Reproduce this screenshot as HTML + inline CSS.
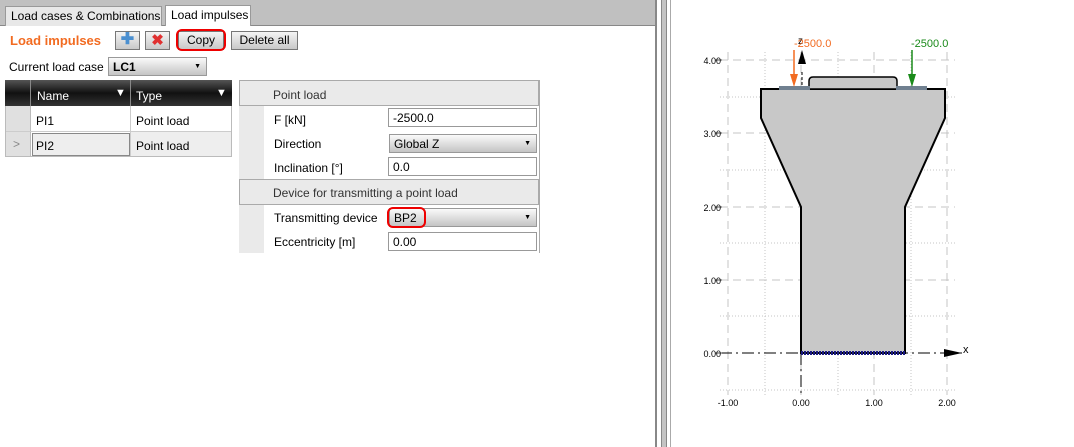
<!DOCTYPE html><html><head><style>
body{margin:0;width:1074px;height:447px;background:#fff;font-family:"Liberation Sans",sans-serif;font-size:12px;position:relative;overflow:hidden;color:#000}
div{white-space:nowrap}
.a{position:absolute}
.tab{position:absolute;border:1px solid #999;border-bottom:none;background:#e8e8e8;padding:2px 0 0 5px;font-size:12px;box-sizing:border-box}
.btn{position:absolute;height:17px;border:1px solid #777;background:linear-gradient(#f4f4f4,#c8c8c8);font-size:12px;text-align:center;line-height:17px}
.inp{position:absolute;border:1px solid #999;background:#fff;height:19px;line-height:18px;padding-left:4px;font-size:12px;box-sizing:border-box}
.dd{background:linear-gradient(#fafafa,#c4c4c4)}
.lbl{position:absolute;font-size:12px}
</style></head><body>
<div class="a" style="left:0;top:0;width:655px;height:25px;background:#c0c0c0"></div>
<div class="a" style="left:0;top:25px;width:655px;height:1px;background:#888"></div>
<div class="tab" style="left:5px;top:6px;height:20px;width:157px">Load cases &amp; Combinations</div>
<div class="tab" style="left:165px;top:5px;height:21px;width:86px;background:#fff">Load impulses</div>
<div class="a" style="left:655px;top:0;width:2px;height:447px;background:#888"></div>
<div class="a" style="left:661px;top:0;width:1px;height:447px;background:#888"></div>
<div class="a" style="left:662px;top:0;width:4px;height:447px;background:#c4c4c4"></div>
<div class="a" style="left:666px;top:0;width:1px;height:447px;background:#888"></div>
<div class="a" style="left:670px;top:0;width:1px;height:447px;background:#aaa"></div>
<div class="a" style="left:10px;top:33px;color:#f26b21;font-weight:bold;font-size:13px">Load impulses</div>
<div class="btn" style="left:115px;top:31px;width:23px;color:#4a8fd0;font-weight:bold;font-size:16px;line-height:16px">✚</div>
<div class="btn" style="left:145px;top:31px;width:23px;color:#e03030;font-weight:bold;font-size:15px;line-height:17px">✖</div>
<div class="btn" style="left:178px;top:31px;width:44px">Copy</div>
<div class="a" style="left:176px;top:29px;width:46px;height:18px;border:2.5px solid #e00;border-radius:6px"></div>
<div class="btn" style="left:231px;top:31px;width:65px">Delete all</div>
<div class="lbl" style="left:9px;top:60px">Current load case</div>
<div class="inp dd" style="left:108px;top:57px;width:99px;font-weight:bold">LC1<span style="position:absolute;right:5px;font-size:7px">▼</span></div>
<div class="a" style="left:5px;top:80px;width:227px;height:26px;background:linear-gradient(#555,#111 50%,#333)"></div>
<div class="a" style="left:30px;top:80px;width:1px;height:26px;background:#888"></div>
<div class="a" style="left:130px;top:80px;width:1px;height:26px;background:#888"></div>
<div class="a" style="left:37px;top:89px;color:#fff;font-size:12px">Name</div>
<div class="a" style="left:136px;top:89px;color:#fff;font-size:12px">Type</div>
<div class="a" style="left:115px;top:87px;color:#fff;font-size:11px">▼</div>
<div class="a" style="left:216px;top:87px;color:#fff;font-size:11px">▼</div>
<div class="a" style="left:5px;top:106px;width:25px;height:50px;background:#e0e0e0;border-right:1px solid #bbb"></div>
<div class="a" style="left:5px;top:131px;width:227px;height:1px;background:#ccc"></div>
<div class="a" style="left:5px;top:106px;width:1px;height:50px;background:#bbb"></div>
<div class="a" style="left:130px;top:106px;width:1px;height:50px;background:#ccc"></div>
<div class="a" style="left:231px;top:106px;width:1px;height:50px;background:#bbb"></div>
<div class="a" style="left:5px;top:156px;width:227px;height:1px;background:#bbb"></div>
<div class="a" style="left:131px;top:132px;width:100px;height:24px;background:#eee"></div>
<div class="a" style="left:32px;top:133px;width:96px;height:21px;border:1px solid #888;background:#eee"></div>
<div class="a" style="left:13px;top:137px;color:#888">&gt;</div>
<div class="lbl" style="left:36px;top:114px">PI1</div><div class="lbl" style="left:136px;top:114px">Point load</div>
<div class="lbl" style="left:36px;top:139px">PI2</div><div class="lbl" style="left:136px;top:139px">Point load</div>
<div class="a" style="left:239px;top:80px;width:300px;height:26px;background:#eaeaea;border:1px solid #aaa;box-sizing:border-box"></div>
<div class="lbl" style="left:273px;top:88px;color:#333">Point load</div>
<div class="a" style="left:239px;top:106px;width:25px;height:74px;background:#eaeaea"></div>
<div class="lbl" style="left:274px;top:113px">F [kN]</div>
<div class="inp" style="left:388px;top:108px;width:149px">-2500.0</div>
<div class="lbl" style="left:274px;top:137px">Direction</div>
<div class="inp dd" style="left:389px;top:134px;width:148px">Global Z<span style="position:absolute;right:5px;font-size:7px">▼</span></div>
<div class="lbl" style="left:274px;top:161px">Inclination [°]</div>
<div class="inp" style="left:388px;top:157px;width:149px">0.0</div>
<div class="a" style="left:239px;top:179px;width:300px;height:26px;background:#eaeaea;border:1px solid #aaa;box-sizing:border-box"></div>
<div class="lbl" style="left:273px;top:186px;color:#333">Device for transmitting a point load</div>
<div class="a" style="left:239px;top:205px;width:25px;height:48px;background:#eaeaea"></div>
<div class="lbl" style="left:274px;top:211px">Transmitting device</div>
<div class="inp dd" style="left:389px;top:208px;width:148px">BP2<span style="position:absolute;right:5px;font-size:7px">▼</span></div>
<div class="a" style="left:387px;top:207px;width:35px;height:17px;border:2.5px solid #e00;border-radius:6px"></div>
<div class="lbl" style="left:274px;top:235px">Eccentricity [m]</div>
<div class="inp" style="left:388px;top:232px;width:149px">0.00</div>
<div class="a" style="left:539px;top:80px;width:1px;height:173px;background:#aaa"></div>
<svg class="a" style="left:0;top:0" width="1074" height="447" font-family="Liberation Sans" font-size="9">
<g stroke="#c4c4c4" stroke-width="1" fill="none">
<g stroke-dasharray="8,5"><path d="M728 52V395M801 52V395M874 52V395M947 52V395M720 60H955M720 133H955M720 207H955M720 280H955"/></g>
<g stroke-dasharray="1,2"><path d="M765 52V397M838 52V397M911 52V397M720 97H955M720 170H955M720 243H955M720 316H955M720 390H955"/></g>
</g>
<path d="M720 353H955M801 353V397" stroke="#000" stroke-dasharray="12,4,2,4" fill="none"/>
<g stroke="#555"><path d="M715 60H722M715 133H722M715 207H722M715 280H722M715 353H722"/></g>
<g fill="#000" text-anchor="end"><text x="721" y="64">4.00</text><text x="721" y="137">3.00</text><text x="721" y="211">2.00</text><text x="721" y="284">1.00</text><text x="721" y="357">0.00</text></g>
<g fill="#000" text-anchor="middle"><text x="728" y="406">-1.00</text><text x="801" y="406">0.00</text><text x="874" y="406">1.00</text><text x="947" y="406">2.00</text></g>
<path d="M801 353V207L761 118V89H945V118L905 207V353Z" fill="#c8c8c8" stroke="#000" stroke-width="2"/>
<path d="M809 89V81Q809 77 813 77H893Q897 77 897 81V89Z" fill="#c8c8c8" stroke="#000" stroke-width="1.5"/>
<rect x="779" y="86" width="31" height="4" fill="#708090"/><rect x="896" y="86" width="31" height="4" fill="#708090"/>
<path d="M801 353H905" stroke="#1a1a80" stroke-width="4" stroke-dasharray="2,1"/>
<path d="M802 85V72" stroke="#000" stroke-dasharray="3,2"/><path d="M798 64L802 50L806 64Z" fill="#000"/>
<text x="798" y="44" fill="#000" font-size="10">z</text>
<path d="M944 353H962" stroke="#000"/><path d="M944 349L962 353L944 357Z" fill="#000"/>
<text x="963" y="353" fill="#000" font-size="11">x</text>
<path d="M794 50V80" stroke="#f26b21" stroke-width="1.5"/><path d="M790 74L794 87L798 74Z" fill="#f26b21"/>
<text x="794" y="47" fill="#f26b21" font-size="11">-2500.0</text>
<path d="M912 50V80" stroke="#1a8a1a" stroke-width="1.5"/><path d="M908 74L912 87L916 74Z" fill="#1a8a1a"/>
<text x="911" y="47" fill="#1a8a1a" font-size="11">-2500.0</text>
</svg>
</body></html>
